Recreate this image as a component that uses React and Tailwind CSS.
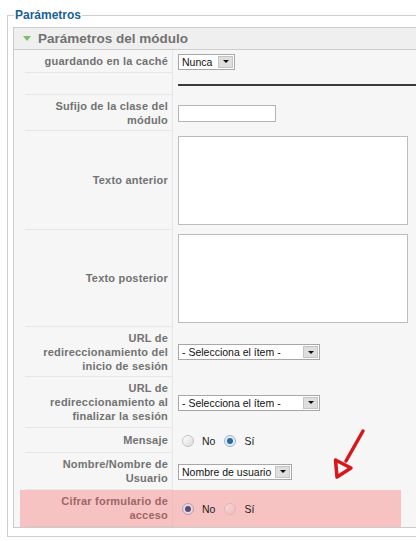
import React from "react";

function Select({ label, width }) {
  return (
    <div
      className="flex items-center h-[16px] border border-[#a7a7a7] bg-white pl-[3px] pr-[1px] justify-between"
      style={{ width }}
    >
      <span className="text-[10.5px] leading-[14px] text-[#111] whitespace-nowrap font-['Liberation_Sans',sans-serif]">
        {label}
      </span>
      <span className="flex items-center justify-center w-[15px] h-[12px] bg-[#dedede] border border-[#c4c4c4]">
        <span className="block w-0 h-0 border-l-[3px] border-r-[3px] border-t-[3px] border-l-transparent border-r-transparent border-t-[#111]" />
      </span>
    </div>
  );
}

function Radio({ checked, pink }) {
  if (checked) {
    return (
      <span
        className={`flex items-center justify-center w-[12px] h-[12px] rounded-full border ${
          pink ? "border-[#b79ab0] bg-[#e8d8e0]" : "border-[#9cb4cc] bg-[#e4ecf4]"
        }`}
      >
        <span
          className={`block w-[6px] h-[6px] rounded-full ${
            pink ? "bg-[#5b4a78]" : "bg-[#2468a8]"
          }`}
        />
      </span>
    );
  }
  return (
    <span
      className={`block w-[12px] h-[12px] rounded-full border ${
        pink
          ? "border-[#e4b4b6] bg-gradient-to-br from-[#f6d8d8] to-[#eebcbc]"
          : "border-[#c4c4c4] bg-gradient-to-br from-[#ffffff] to-[#dcdcdc]"
      }`}
    />
  );
}

function RadioPair({ yes, pink }) {
  return (
    <div className="flex items-center text-[10.5px] leading-[14px] text-[#222] font-['Liberation_Sans',sans-serif]">
      <span className="ml-[4px]">
        <Radio checked={!yes} pink={pink} />
      </span>
      <span className="ml-[8px]">No</span>
      <span className="ml-[9px]">
        <Radio checked={yes} pink={pink} />
      </span>
      <span className="ml-[8px]">Sí</span>
    </div>
  );
}

function Row({ label, h, children, pink }) {
  return (
    <div className={`flex ${h} ${pink ? "w-[381px] bg-[#f7c2c2]" : ""} pl-[5px]`}>
      <div
        className={`w-[148px] shrink-0 flex items-center justify-end text-right pr-[4px] border-r border-b ${
          pink ? "border-[#efbcbc] text-[#a06666]" : "border-[#e6e6e6] text-[#727272]"
        } text-[11px] leading-[14px] font-bold tracking-[0.2px]`}
      >
        <span>{label}</span>
      </div>
      <div className="flex-1 flex items-center pl-[5px]">{children}</div>
    </div>
  );
}

export default function App() {
  return (
    <div className="relative w-[416px] h-[541px] overflow-hidden bg-white font-['Liberation_Sans',Arial,sans-serif]">
      <div className="relative mt-[15px] ml-[7px] w-[440px] h-[522px] border border-[#cfcfcf] pt-[11px] pl-[5px]">
        <span className="absolute -top-[9px] left-[6px] bg-white px-[1px] text-[12px] leading-[16px] font-bold text-[#1a5f98]">
          Parámetros
        </span>
        <div className="border border-[#cccccc] bg-[#f6f6f6]">
          <div className="flex items-center h-[22px] bg-[#efefef] border-b border-[#cdcdcd] pl-[9px]">
            <span className="block w-0 h-0 border-l-[4px] border-r-[4px] border-t-[5px] border-l-transparent border-r-transparent border-t-[#7fbf62]" />
            <span className="ml-[7px] text-[13.5px] leading-[16px] font-bold text-[#727272]">
              Parámetros del módulo
            </span>
          </div>
          <div className="pl-[6px]">
            <Row label="guardando en la caché" h="h-[23px]">
              <Select label="Nunca" width={57} />
            </Row>
            <Row label="" h="h-[22px]">
              <div className="w-full h-[2px] bg-[#3a3a3a] mt-[1px]" />
            </Row>
            <Row
              label={
                <>
                  Sufijo de la clase del
                  <br />
                  módulo
                </>
              }
              h="h-[36px]"
            >
              <div className="w-[98px] h-[17px] border border-[#b4b4b4] bg-white" />
            </Row>
            <Row label="Texto anterior" h="h-[99px]">
              <div className="w-[230px] h-[89px] border border-[#bcbcbc] bg-white" />
            </Row>
            <Row label="Texto posterior" h="h-[97px]">
              <div className="w-[230px] h-[89px] border border-[#bcbcbc] bg-white" />
            </Row>
            <Row
              label={
                <>
                  URL de
                  <br />
                  redireccionamiento del
                  <br />
                  inicio de sesión
                </>
              }
              h="h-[50px]"
            >
              <Select label="- Selecciona el ítem -" width={142} />
            </Row>
            <Row
              label={
                <>
                  URL de
                  <br />
                  redireccionamiento al
                  <br />
                  finalizar la sesión
                </>
              }
              h="h-[51px]"
            >
              <Select label="- Selecciona el ítem -" width={142} />
            </Row>
            <Row label="Mensaje" h="h-[25px]">
              <RadioPair yes={true} />
            </Row>
            <Row
              label={
                <>
                  Nombre/Nombre de
                  <br />
                  Usuario
                </>
              }
              h="h-[37px]"
            >
              <Select label="Nombre de usuario" width={114} />
            </Row>
            <Row
              label={
                <>
                  Cifrar formulario de
                  <br />
                  acceso
                </>
              }
              h="h-[37px]"
              pink
            >
              <RadioPair yes={false} pink />
            </Row>
          </div>
        </div>
      </div>
      <svg
        className="absolute left-0 top-0 pointer-events-none"
        width="416"
        height="541"
        viewBox="0 0 416 541"
      >
        <g
          fill="none"
          stroke="#d8161b"
          strokeWidth="3.5"
          strokeLinecap="round"
          strokeLinejoin="round"
        >
          <path d="M363 431 L346 461" />
          <path d="M335.5 460 L351 468 L337 477 Z" />
        </g>
      </svg>
    </div>
  );
}
